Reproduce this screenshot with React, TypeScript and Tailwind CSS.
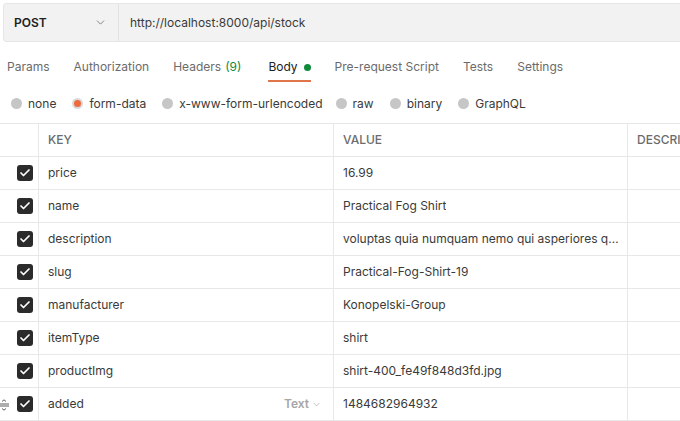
import { Check, ChevronDown } from 'lucide-react';

const rows = [
  { key: 'price', value: '16.99' },
  { key: 'name', value: 'Practical Fog Shirt' },
  { key: 'description', value: 'voluptas quia numquam nemo qui asperiores quibusdam' },
  { key: 'slug', value: 'Practical-Fog-Shirt-19' },
  { key: 'manufacturer', value: 'Konopelski-Group' },
  { key: 'itemType', value: 'shirt' },
  { key: 'productImg', value: 'shirt-400_fe49f848d3fd.jpg' },
  { key: 'added', value: '1484682964932', hover: true },
];

const tabs = ['Params', 'Authorization', 'Headers', 'Body', 'Pre-request Script', 'Tests', 'Settings'];

const bodyTypes = ['none', 'form-data', 'x-www-form-urlencoded', 'raw', 'binary', 'GraphQL'];

function Grip() {
  return (
    <svg width="12" height="12" viewBox="0 0 12 12" className="absolute left-[-2px] top-[11px]" fill="none" stroke="#5c5c5c" strokeWidth="1">
      <path d="M4 2.5 L6 0.8 L8 2.5" />
      <path d="M0 5 H11 M0 7 H11" />
      <path d="M4 9.5 L6 11.2 L8 9.5" />
    </svg>
  );
}

export default function App() {
  return (
    <div className="w-[680px] h-[421px] overflow-hidden bg-white text-[12px] text-[#212121]" style={{ fontFamily: 'Inter, "Noto Sans", sans-serif' }}>
      <div className="ml-[3px] mt-[3px] h-[39px] flex border border-[#e6e6e6] border-r-0 rounded-l-[4px] bg-[#f2f2f2]">
        <div className="w-[115px] shrink-0 flex items-center justify-between pl-[10px] pr-[11px] border-r border-[#e3e3e3]">
          <span className="font-semibold text-[12px] text-[#212121]">POST</span>
          <ChevronDown className="w-[13px] h-[13px] text-[#6b6b6b]" strokeWidth={1.5} />
        </div>
        <div className="flex items-center pl-[11px] text-[#3a3a3a]">http://localhost:8000/api/stock</div>
      </div>

      <div className="h-[42px] flex items-stretch pl-[7px] gap-[24px] text-[#6b6b6b]">
        {tabs.map((t) => (
          <div key={t} className={`flex items-center pt-[8px] relative ${t === 'Body' ? 'text-[#212121] ml-[3px]' : ''}`}>
            {t}
            {t === 'Headers' && <span className="ml-[4px] text-[#0f8a3b]">(9)</span>}
            {t === 'Body' && <span className="ml-[6px] w-[7px] h-[7px] rounded-full bg-[#0f8a3b]" />}
            {t === 'Body' && <span className="absolute left-0 right-0 bottom-[2px] h-[2px] bg-[#e0744a]" />}
          </div>
        ))}
      </div>

      <div className="h-[39px] flex items-center pl-[11px] gap-[16px] text-[#3a3a3a]">
        {bodyTypes.map((b) => (
          <div key={b} className={`flex items-center gap-[6px] ${b === 'raw' ? '-ml-[3px]' : ''}`}>
            {b === 'form-data' ? (
              <span className="w-[11px] h-[11px] rounded-full bg-[#ee6a3c] border-[2px] border-[#d9d9d9]" />
            ) : (
              <span className="w-[11px] h-[11px] rounded-full bg-[#c6c6c6]" />
            )}
            <span>{b}</span>
          </div>
        ))}
      </div>

      <div className="border-t border-[#e8e8e8]">
        <div className="grid grid-cols-[39px_295px_294px_200px] h-[33px] border-b border-[#e8e8e8] text-[#6b6b6b] font-medium text-[12px]">
          <div className="border-r border-[#e8e8e8]" />
          <div className="flex items-center pl-[9px] border-r border-[#e8e8e8]">KEY</div>
          <div className="flex items-center pl-[9px] border-r border-[#e8e8e8]">VALUE</div>
          <div className="flex items-center pl-[9px]">DESCRIPTION</div>
        </div>
        {rows.map((r) => (
          <div key={r.key} className="grid grid-cols-[39px_295px_294px_200px] h-[33px] border-b border-[#e8e8e8] text-[#3a3a3a]">
            <div className="relative flex items-center justify-end pr-[5px] border-r border-[#e8e8e8]">
              {r.hover && <Grip />}
              <span className="w-[16px] h-[16px] rounded-[3px] bg-[#2b2b2b] flex items-center justify-center">
                <Check className="w-[12px] h-[12px] text-white" strokeWidth={3.5} />
              </span>
            </div>
            <div className="flex items-center justify-between pl-[9px] pr-[11px] border-r border-[#e8e8e8]">
              <span>{r.key}</span>
              {r.hover && (
                <span className="flex items-center gap-[2px] text-[#a6a6a6] font-semibold">
                  Text
                  <ChevronDown className="w-[11px] h-[11px]" strokeWidth={1.5} />
                </span>
              )}
            </div>
            <div className="flex items-center pl-[9px] pr-[6px] border-r border-[#e8e8e8] min-w-0">
              <span className="truncate">{r.value}</span>
            </div>
            <div />
          </div>
        ))}
      </div>
    </div>
  );
}
